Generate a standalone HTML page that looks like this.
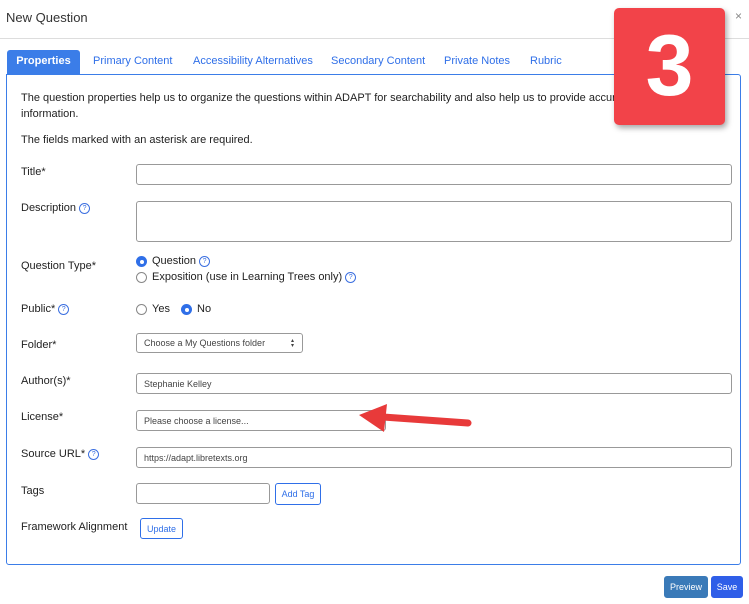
<!DOCTYPE html><html><head><style>
body{margin:0;width:749px;height:604px;background:#fff;font-family:"Liberation Sans",sans-serif;color:#222;position:relative;overflow:hidden}
.a{position:absolute}
.t{font-size:11px;white-space:nowrap}
.in{position:absolute;border:1px solid #999;border-radius:3px;background:#fff;box-sizing:border-box;font-size:9px;color:#444;padding-left:7px;display:flex;align-items:center}
.q{display:inline-block;width:9px;height:9px;border:1px solid #3b6fe0;border-radius:50%;font-size:7px;line-height:9px;text-align:center;color:#3b6fe0;vertical-align:1px;margin-left:3px}
.r{position:absolute;width:11px;height:11px;border-radius:50%;box-sizing:border-box;border:1px solid #888;background:#fff}
.r.on{background:#2f6fe8;border:none}
.r.on::after{content:"";position:absolute;left:3.5px;top:3.5px;width:4px;height:4px;border-radius:50%;background:#fff}
.tab{position:absolute;top:55px;font-size:11px;color:#2f6fe8}
.btn{position:absolute;border:1px solid #2f6fe8;border-radius:3px;color:#2f6fe8;font-size:9px;display:flex;align-items:center;justify-content:center;box-sizing:border-box}
</style></head><body>
<div class="a t" style="left:6px;top:10px;font-size:13px;color:#333">New Question</div>
<div class="a" style="left:735px;top:9px;font-size:12px;color:#888">×</div>
<div class="a" style="left:0;top:38px;width:749px;height:1px;background:#ddd"></div>
<div class="a" style="left:7px;top:50px;width:73px;height:24px;background:#3b7de8;border-radius:3px 3px 0 0;color:#fff;font-size:11px;font-weight:bold;text-align:center;line-height:23px">Properties</div>
<div class="tab" style="left:93px">Primary Content</div>
<div class="tab" style="left:193px">Accessibility Alternatives</div>
<div class="tab" style="left:331px">Secondary Content</div>
<div class="tab" style="left:444px">Private Notes</div>
<div class="tab" style="left:530px">Rubric</div>
<div class="a" style="left:6px;top:74px;width:735px;height:491px;border:1px solid #3b7de8;border-radius:0 3px 3px 3px;box-sizing:border-box"></div>
<div class="a t" style="left:21px;top:92px">The question properties help us to organize the questions within ADAPT for searchability and also help us to provide accurate a</div>
<div class="a t" style="left:21px;top:108px">information.</div>
<div class="a t" style="left:21px;top:134px">The fields marked with an asterisk are required.</div>
<div class="a t" style="left:21px;top:166px">Title*</div>
<div class="in" style="left:136px;top:164px;width:596px;height:21px"></div>
<div class="a t" style="left:21px;top:202px">Description<span class="q">?</span></div>
<div class="in" style="left:136px;top:201px;width:596px;height:41px"></div>
<div class="a t" style="left:21px;top:260px">Question Type*</div>
<div class="r on" style="left:136px;top:256px"></div>
<div class="a t" style="left:152px;top:255px">Question<span class="q">?</span></div>
<div class="r" style="left:136px;top:272px"></div>
<div class="a t" style="left:152px;top:271px">Exposition (use in Learning Trees only)<span class="q">?</span></div>
<div class="a t" style="left:21px;top:303px">Public*<span class="q">?</span></div>
<div class="r" style="left:136px;top:304px"></div>
<div class="a t" style="left:152px;top:303px">Yes</div>
<div class="r on" style="left:181px;top:304px"></div>
<div class="a t" style="left:197px;top:303px">No</div>
<div class="a t" style="left:21px;top:339px">Folder*</div>
<div class="in" style="left:136px;top:333px;width:167px;height:20px">Choose a My Questions folder<span style="position:absolute;right:8px;font-size:6px;line-height:5px;top:5px">▴<br>▾</span></div>
<div class="a t" style="left:21px;top:375px">Author(s)*</div>
<div class="in" style="left:136px;top:373px;width:596px;height:21px">Stephanie Kelley</div>
<div class="a t" style="left:21px;top:411px">License*</div>
<div class="in" style="left:136px;top:410px;width:250px;height:21px">Please choose a license...</div>
<svg class="a" style="left:355px;top:403px" width="125" height="32"><path d="M113 20 L28 14" stroke="#e83a3a" stroke-width="7" stroke-linecap="round"/><path d="M4 12 L32 1 L29 29 Z" fill="#e83a3a"/></svg>
<div class="a t" style="left:21px;top:448px">Source URL*<span class="q">?</span></div>
<div class="in" style="left:136px;top:447px;width:596px;height:21px">https://adapt.libretexts.org</div>
<div class="a t" style="left:21px;top:485px">Tags</div>
<div class="in" style="left:136px;top:483px;width:134px;height:21px"></div>
<div class="btn" style="left:275px;top:483px;width:46px;height:22px">Add Tag</div>
<div class="a t" style="left:21px;top:521px">Framework Alignment</div>
<div class="btn" style="left:140px;top:518px;width:43px;height:21px">Update</div>
<div class="btn" style="left:664px;top:576px;width:44px;height:22px;background:#3a7ab8;border-color:#3a7ab8;color:#fff">Preview</div>
<div class="btn" style="left:711px;top:576px;width:32px;height:22px;background:#2f5ee8;border-color:#2f5ee8;color:#fff">Save</div>
<div class="a" style="left:614px;top:8px;width:111px;height:117px;background:#f24349;border-radius:5px;box-shadow:2px 3px 6px rgba(0,0,0,.35);color:#fff;font-weight:bold;font-size:86px;text-align:center;line-height:117px">3</div>
</body></html>
